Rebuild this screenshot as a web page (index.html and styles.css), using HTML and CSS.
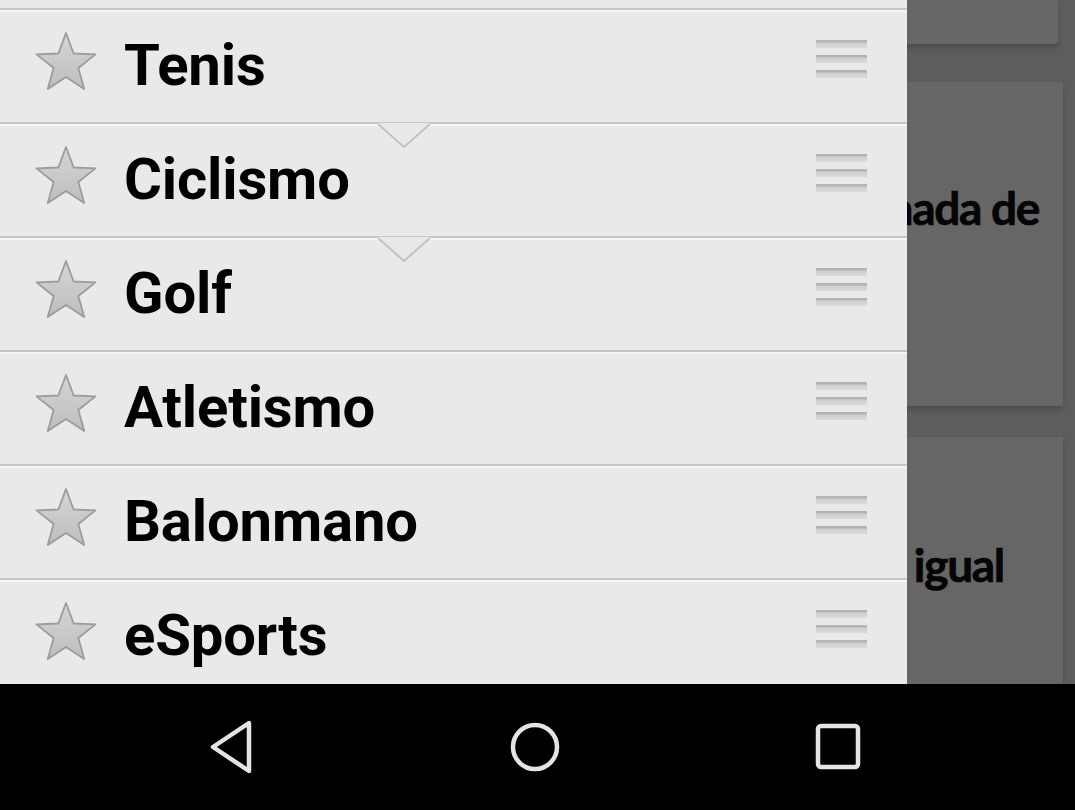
FILE: index.html
```html
<!DOCTYPE html>
<html lang="es">
<head>
<meta charset="utf-8">
<title>Deportes</title>
<link rel="stylesheet" href="styles.css">
</head>
<body>
<div class="phone">
  <div class="screen">
    <div class="content">
      <div class="card card-top"></div>
      <div class="card card-mid">
        <p class="card-title">Convocatoria para la jornada de</p>
      </div>
      <div class="card card-low">
        <p class="card-title card-title-low">El partido terminó igual</p>
      </div>
    </div>

    <nav class="drawer">
      <div class="row-partial"></div>

      <div class="row">
        <svg class="star" viewBox="0 0 64 64"><use href="#star"/></svg>
        <span class="label">Tenis</span>
        <div class="handle"><i></i><i></i><i></i></div>
      </div>

      <div class="row">
        <svg class="notch" viewBox="0 0 52 28"><polygon points="0,0 52,0 26,24" fill="#e9e9e9"/><polyline points="0,1 26,24 52,1" fill="none" stroke="#c2c2c2" stroke-width="2"/></svg>
        <svg class="star" viewBox="0 0 64 64"><use href="#star"/></svg>
        <span class="label">Ciclismo</span>
        <div class="handle"><i></i><i></i><i></i></div>
      </div>

      <div class="row">
        <svg class="notch" viewBox="0 0 52 28"><polygon points="0,0 52,0 26,24" fill="#e9e9e9"/><polyline points="0,1 26,24 52,1" fill="none" stroke="#c2c2c2" stroke-width="2"/></svg>
        <svg class="star" viewBox="0 0 64 64"><use href="#star"/></svg>
        <span class="label">Golf</span>
        <div class="handle"><i></i><i></i><i></i></div>
      </div>

      <div class="row">
        <svg class="star" viewBox="0 0 64 64"><use href="#star"/></svg>
        <span class="label">Atletismo</span>
        <div class="handle"><i></i><i></i><i></i></div>
      </div>

      <div class="row">
        <svg class="star" viewBox="0 0 64 64"><use href="#star"/></svg>
        <span class="label">Balonmano</span>
        <div class="handle"><i></i><i></i><i></i></div>
      </div>

      <div class="row">
        <svg class="star" viewBox="0 0 64 64"><use href="#star"/></svg>
        <span class="label">eSports</span>
        <div class="handle"><i></i><i></i><i></i></div>
      </div>
    </nav>
  </div>

  <div class="navbar">
    <div class="nav-item">
      <svg width="48" height="54" viewBox="0 0 48 54"><path d="M41 3 L41 51 L5 27 Z" fill="none" stroke="#e4e4e4" stroke-width="4.5" stroke-linejoin="round"/></svg>
    </div>
    <div class="nav-item">
      <svg width="54" height="54" viewBox="0 0 54 54"><circle cx="27" cy="27" r="22" fill="none" stroke="#e4e4e4" stroke-width="4.5"/></svg>
    </div>
    <div class="nav-item">
      <svg width="48" height="48" viewBox="0 0 48 48"><rect x="3" y="3" width="40" height="41" rx="3" fill="none" stroke="#e4e4e4" stroke-width="4.5"/></svg>
    </div>
  </div>
</div>

<svg class="defs" width="0" height="0">
  <defs>
    <linearGradient id="starFill" x1="0" y1="0" x2="0" y2="1">
      <stop offset="0" stop-color="#d6d4d4"/>
      <stop offset="1" stop-color="#bfbdbd"/>
    </linearGradient>
    <symbol id="star" viewBox="0 0 64 64">
      <polygon points="32,1 39.64,21.48 61.48,22.42 44.36,36.02 50.23,57.08 32,45 13.77,57.08 19.64,36.02 2.52,22.42 24.36,21.48" fill="url(#starFill)" stroke="#9c9c9c" stroke-width="1.8" stroke-linejoin="round"/>
    </symbol>
  </defs>
</svg>
</body>
</html>
```

FILE: styles.css
```css
html, body {
  margin: 0;
  padding: 0;
}

body {
  width: 1075px;
  height: 810px;
  overflow: hidden;
  background: #000;
  font-family: Roboto, "Liberation Sans", sans-serif;
}

.defs {
  position: absolute;
  width: 0;
  height: 0;
}

.phone {
  display: flex;
  flex-direction: column;
  width: 1075px;
  height: 810px;
}

.screen {
  position: relative;
  height: 684px;
  overflow: hidden;
  background: #5d5d5d;
}

/* dimmed content behind drawer */
.content {
  display: flex;
  flex-direction: column;
  padding-left: 16px;
}

.card {
  background: #666666;
  box-shadow: 0 4px 5px rgba(0, 0, 0, 0.18);
}

.card-top {
  height: 44px;
  width: 1042px;
  border-radius: 0 0 3px 3px;
}

.card-mid {
  margin-top: 38px;
  height: 324px;
  width: 1047px;
}

.card-low {
  margin-top: 31px;
  height: 280px;
  width: 1047px;
}

.card-title {
  margin: 0;
  padding: 98px 24px 0 0;
  text-align: right;
  white-space: nowrap;
  font-family: Lato, "Open Sans", sans-serif;
  font-weight: 700;
  font-size: 46px;
  line-height: 1.2;
  letter-spacing: -1.3px;
  -webkit-text-stroke: 0.7px #050505;
  color: #050505;
}

.card-title-low {
  padding-top: 100px;
  padding-right: 59px;
  word-spacing: 6px;
}

/* drawer */
.drawer {
  position: absolute;
  left: 0;
  top: 0;
  width: 907px;
  height: 684px;
  background: #e9e9e9;
  overflow: hidden;
}

.row-partial {
  height: 10px;
  box-sizing: border-box;
  border-bottom: 2px solid #c6c6c6;
}

.row {
  position: relative;
  display: flex;
  align-items: flex-start;
  height: 114px;
  box-sizing: border-box;
  border-top: 2px solid #f4f4f4;
  border-bottom: 2px solid #c6c6c6;
  padding-left: 34px;
}

.notch {
  position: absolute;
  left: 378px;
  top: -3px;
  width: 52px;
  height: 28px;
}

.star {
  width: 64px;
  height: 64px;
  margin-top: 20px;
  flex: none;
}

.label {
  flex: 1;
  margin-left: 26px;
  margin-top: 24px;
  font-size: 58px;
  line-height: 1;
  font-weight: 700;
  color: #000;
  letter-spacing: -0.15px;
}

.handle {
  display: flex;
  flex-direction: column;
  gap: 7px;
  width: 51px;
  margin-top: 28px;
  margin-right: 40px;
  flex: none;
}

.handle i {
  display: block;
  height: 8px;
  background: linear-gradient(to bottom, #b3b3b3 0, #b3b3b3 2px, #cfcfcf 3px, #dadada 8px);
}

/* system navigation bar */
.navbar {
  flex: 1;
  display: grid;
  grid-template-columns: repeat(3, 1fr);
  align-items: center;
  padding: 0 84px 0 80px;
  background: #000;
}

.nav-item {
  display: flex;
  justify-content: center;
  align-items: center;
}
```
